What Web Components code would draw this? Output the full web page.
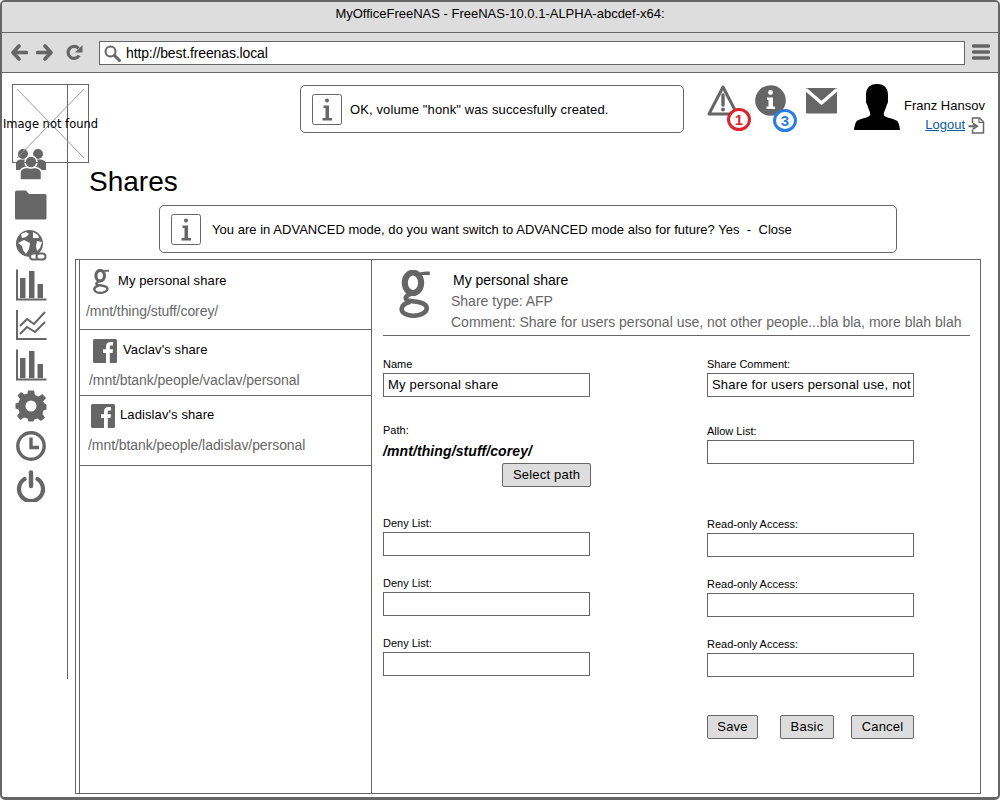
<!DOCTYPE html>
<html><head><meta charset="utf-8"><title>FreeNAS</title>
<style>
html,body{margin:0;padding:0;background:#fff}
body{font:13px "Liberation Sans",Arial,sans-serif;color:#000;width:1000px;height:800px;overflow:hidden}
</style></head><body>
<fs-window>
  <fs-titlebar>MyOfficeFreeNAS - FreeNAS-10.0.1-ALPHA-abcdef-x64:</fs-titlebar>
  <fs-toolbar url="http://best.freenas.local"></fs-toolbar>
  <fs-main>
    <fs-sidenav></fs-sidenav>
    <fs-content>
      <fs-header></fs-header>
      <fs-title>Shares</fs-title>
      <fs-notice class="banner" style="--gap:10px;letter-spacing:.03px">You are in ADVANCED mode, do you want switch to ADVANCED mode also for future? Yes&nbsp; -&nbsp; Close</fs-notice>
      <fs-panel>
        <fs-list slot="list">
          <fs-row icon="g" name="My personal share" path="/mnt/thing/stuff/corey/" style="--ix:13px;--gap:9px;--px:6px;--top:9px;--h:70px;--name:2px;--pt:9px"></fs-row>
          <fs-row icon="f" name="Vaclav's share" path="/mnt/btank/people/vaclav/personal" style="--ix:13px;--gap:6px;--px:9px;--top:9px;--h:66px;--name:1px;--pt:9px"></fs-row>
          <fs-row icon="f" name="Ladislav's share" path="/mnt/btank/people/ladislav/personal" style="--ix:11px;--gap:5px;--px:8px;--top:8px;--h:70px;--name:1px;--pt:9px"></fs-row>
        </fs-list>
        <fs-detail slot="detail"></fs-detail>
      </fs-panel>
    </fs-content>
    <fs-logo></fs-logo>
  </fs-main>
</fs-window>
<script>
const FONT='"Liberation Sans",Arial,sans-serif';
const ICONS={
 back:'<svg width="17" height="17" viewBox="0 0 17 17"><path d="M8 2 2 8.500 8 15M2.500 8.500H15.500" fill="none" stroke="#666" stroke-width="3.600" stroke-linecap="round" stroke-linejoin="round"/></svg>',
 fwd:'<svg width="17" height="17" viewBox="0 0 17 17"><path d="M9 2 15 8.500 9 15M14.500 8.500H1.500" fill="none" stroke="#666" stroke-width="3.600" stroke-linecap="round" stroke-linejoin="round"/></svg>',
 reload:'<svg width="17" height="17" viewBox="0 0 17 17"><path d="M13.200 11.500A6 6 0 1 1 12.500 4.300" fill="none" stroke="#666" stroke-width="3.200"/><path d="M16.500 1V8.500H9Z" fill="#666"/></svg>',
 search:'<svg width="17" height="17" viewBox="0 0 17 17"><circle cx="6.500" cy="6.500" r="5" fill="none" stroke="#666" stroke-width="2"/><path d="M10.500 10.500 15.500 15.500" stroke="#666" stroke-width="3" stroke-linecap="round"/></svg>',
 burger:'<svg width="18" height="18" viewBox="0 0 18 18"><path d="M1.500 2H16.500M1.500 8H16.500M1.500 14H16.500" stroke="#666" stroke-width="3.400" stroke-linecap="round"/></svg>',
 users:'<svg width="32" height="32" viewBox="0 0 32 32"><g fill="#666"><circle cx="8" cy="6" r="5"/><circle cx="23" cy="6" r="5"/><path d="M1 22V15.500Q1 12.500 5 11.500H11Q15 12.500 15 15.500V22ZM16 22V15.500Q16 12.500 20 11.500H26Q31 12.500 31 15.500V22Z"/><path d="M5 32V24.500Q5 21 10 19.500H21Q26.500 21 26.500 24.500V32Z" stroke="#fff" stroke-width="1.500"/><circle cx="16" cy="14" r="6" stroke="#fff" stroke-width="1.500"/></g></svg>',
 folder:'<svg width="32" height="32" viewBox="0 0 32 32"><path d="M0 4.500Q0 2.500 2 2.500H11L14 6H30Q31.500 6 31.500 7.500V30Q31.500 31.500 30 31.500H1.500Q0 31.500 0 30Z" fill="#666"/></svg>',
 globe:'<svg width="32" height="32" viewBox="0 0 32 32"><circle cx="14.500" cy="14.500" r="13.500" fill="#666"/><path d="M6 5 11 3 14 5 11 8 7 9ZM3 14 9 11 15 14 14 20 11 25 8 21 7 17ZM18 3 23 6 24 9 18 9ZM22 12 27 13 25 19 22 22 21 17Z" fill="#fff"/><g fill="#fff" stroke="#666" stroke-width="2"><rect x="15" y="24.500" width="9" height="6" rx="3"/><rect x="21.500" y="24.500" width="9" height="6" rx="3"/></g></svg>',
 bars:'<svg width="32" height="32" viewBox="0 0 32 32"><path d="M2 .500V30.500H31.500" fill="none" stroke="#666" stroke-width="2"/><path d="M5 9H10.500V29H5ZM14 2H19.500V29H14ZM22.500 15H28V29H22.500Z" fill="#666"/></svg>',
 lines:'<svg width="32" height="32" viewBox="0 0 32 32"><path d="M2 1V30H31.500" fill="none" stroke="#666" stroke-width="2"/><path d="M5 17 12 10 19 15 30 3M5 25 12 18 20 23 30 13" fill="none" stroke="#666" stroke-width="2"/></svg>',
 gear:'<svg width="32" height="32" viewBox="0 0 32 32"><path fill="#666" fill-rule="evenodd" d="M13 .5H19L20 5 23.500 6.500 27.500 4 31 8 28 11.500 29.500 13.500 31.500 14.500V19.500L28.500 20.500 27.500 24 30 27.500 26 31 22.500 28.500 19.500 29.500 18.500 31.500H13.500L12.500 28.500 9 27.500 5.500 30 2 26 4.500 22.500 3.500 19.500.5 18.500V13.500L3.500 12.500 5 9 2.500 5.500 6 2 9.500 4.500 12.500 3.500ZM16 10.500A5.500 5.500 0 1 0 16 21.500 5.500 5.500 0 0 0 16 10.500Z"/></svg>',
 clock:'<svg width="32" height="32" viewBox="0 0 32 32"><circle cx="16" cy="16" r="13.200" fill="none" stroke="#666" stroke-width="3.400"/><path d="M16 7.500V17.500H24" fill="none" stroke="#666" stroke-width="3.400"/></svg>',
 power:'<svg width="32" height="32" viewBox="0 0 32 32"><path d="M9.500 9A12 12 0 1 0 22.500 9" fill="none" stroke="#666" stroke-width="4.200" stroke-linecap="round"/><path d="M16 2.500V16" stroke="#666" stroke-width="4.400" stroke-linecap="round"/></svg>',
 info:'<svg width="31" height="31" viewBox="0 0 31 31"><rect x=".5" y=".5" width="29" height="30" rx="2" fill="#fff" stroke="#666"/><circle cx="15" cy="6.500" r="2" fill="#666"/><path d="M11.500 11.500H17V24H20V26.500H10.500V24H13.500V14H11.500Z" fill="#666"/></svg>',
 warn:'<svg width="32" height="33" viewBox="0 0 32 33"><path d="M16 3 30 30H2Z" fill="#fff" stroke="#666" stroke-width="3" stroke-linejoin="round"/><path d="M16 11V21" stroke="#666" stroke-width="3.400" stroke-linecap="round"/><circle cx="16" cy="25.500" r="1.900" fill="#666"/></svg>',
 infoc:'<svg width="31" height="31" viewBox="0 0 31 31"><circle cx="15.500" cy="15.500" r="15.300" fill="#666"/><circle cx="15.500" cy="7.500" r="2.400" fill="#fff"/><path d="M12 12.500H18V21.500H20V24H11.500V21.500H13.500V15H12Z" fill="#fff"/></svg>',
 mail:'<svg width="31" height="26" viewBox="0 0 31 26"><rect width="31" height="25.500" rx="1" fill="#666"/><path d="M0 1.500 15.500 15 31 1.500" fill="none" stroke="#fff" stroke-width="3.400"/></svg>',
 avatar:'<svg width="46" height="46" viewBox="0 0 46 46"><path d="M23 0C14 0 11.500 6 12 13 12.300 16.500 11.500 18 12.500 19.500 13.500 21 14 24 15 26 16 28 16.500 30 16 31.500 13 34.500 4 34.500 2 38 .5 41 .3 44 0 46H46C45.700 44 45.500 41 44 38 42 34.500 33 34.500 30 31.500 29.500 30 30 28 31 26 32 24 32.500 21 33.500 19.500 34.500 18 33.700 16.500 34 13 34.500 6 32 0 23 0Z" fill="#000"/></svg>',
 logout:'<svg width="17" height="17" viewBox="0 0 17 17"><path d="M4.500 6V1H11.500L15.500 5V16H4.500V12.500" fill="none" stroke="#666" stroke-width="1.500"/><path d="M11 1.500V5.500H15" fill="none" stroke="#666" stroke-width="1.200"/><path d="M.5 9.300H6.500M5 6.500 9 9.300 5 12" fill="none" stroke="#666" stroke-width="2"/></svg>',
 f:'<svg width="24" height="24" viewBox="0 0 24 24"><rect width="24" height="24" rx="1.500" fill="#666"/><path d="M13 24V14H10V10.300H13V7.500C13 4.500 14.800 3 17.300 3H20V6.500H18.200C17 6.500 16.800 7 16.800 8V10.300H20L19.500 14H16.800V24Z" fill="#fff"/></svg>',
 g:'<svg width="16" height="25" viewBox="0 0 30 47"><g fill="none" stroke="#666"><ellipse cx="13.500" cy="12.500" rx="8" ry="10" stroke-width="6"/><path d="M12 23C7 25 5.500 27 7 29 9 31.500 26 29.500 27 37 27.500 42 20 45 13 44.800 6 44.500 2 41.500 2.500 37.500 3 34 7 32 11 31" stroke-width="4.500"/></g><path d="M17 4.500C20 1.500 25 1.500 30 1.500V5H20Z" fill="#666"/></svg>'
};
function el(name,tpl,after){
  customElements.define(name,class extends HTMLElement{
    constructor(){super();this.attachShadow({mode:'open'}).innerHTML=typeof tpl==='function'?tpl(this):tpl;}
    connectedCallback(){if(after)after(this);}
  });
}
const bigG=ICONS.g.replace('width="16" height="25"','width="31" height="48"');

el('fs-icon',h=>`<style>:host{display:inline-flex;flex:none;line-height:0}</style><span id="i"></span>`,h=>{
  h.shadowRoot.getElementById('i').innerHTML=ICONS[h.getAttribute('name')]||'';
});
el('fs-window',`<style>:host{display:flex;flex-direction:column;box-sizing:border-box;width:1000px;height:800px;border:2px solid #666;border-bottom-width:3px;border-radius:5px;overflow:hidden;background:#fff}</style><slot></slot>`);
el('fs-titlebar',`<style>:host{display:flex;flex:none;align-items:center;justify-content:center;box-sizing:border-box;height:31px;padding-bottom:7px;background:#ddd;border-bottom:1px solid #666;font:13px ${FONT};color:#000}</style><slot></slot>`);
el('fs-toolbar',h=>`<style>
:host{display:flex;flex:none;box-sizing:border-box;height:40px;background:#ddd;border-bottom:1px solid #666;align-items:flex-start}
fs-icon{margin-top:11px}
.url{box-sizing:border-box;display:flex;align-items:center;width:866px;height:24px;margin:8px 0 0 16px;border:1px solid #666;background:#fff;font:14px ${FONT};letter-spacing:-.12px}
.url fs-icon{margin:0 5px 0 4px}
</style>
<fs-icon name="back" style="margin-left:9px"></fs-icon>
<fs-icon name="fwd" style="margin-left:8px"></fs-icon>
<fs-icon name="reload" style="margin-left:13px"></fs-icon>
<div class="url"><fs-icon name="search"></fs-icon><span>${h.getAttribute('url')}</span></div>
<fs-icon name="burger" style="margin-left:7px;margin-top:11px"></fs-icon>`);
el('fs-main',`<style>:host{display:flex;flex:1;position:relative;min-height:0}</style><slot></slot>`);
el('fs-sidenav',`<style>
:host{display:flex;flex:none;flex-direction:column;box-sizing:border-box;width:66px;height:595px;margin-top:11px;border-right:1px solid #666;padding:64px 0 0 13px;gap:8.250px}
</style>${['users','folder','globe','bars','lines','bars','gear','clock','power'].map(n=>`<fs-icon name="${n}"></fs-icon>`).join('')}`);
el('fs-logo',`<style>
:host{position:absolute;left:10px;top:11px;width:77px;height:79px;box-sizing:border-box;border:1px solid #666;display:flex;align-items:center;justify-content:center;padding-top:1px}
svg{position:absolute;inset:0}
span{position:relative;font:11.500px "DejaVu Sans",sans-serif;color:#000;white-space:nowrap}
</style><svg width="75" height="77" viewBox="0 0 75 77"><path d="M4 4 71 73M71 4 4 73" stroke="#999" stroke-width="1" fill="none"/></svg><span>Image not found</span>`);
el('fs-content',`<style>:host{display:flex;flex-direction:column;flex:1;min-width:0}</style><slot></slot>`);
el('fs-notice',`<style>
:host{display:flex;align-items:center;box-sizing:border-box;width:738px;height:48px;margin-left:91px;margin-top:4px;border:1px solid #666;border-radius:5px;padding-left:11px;gap:var(--gap,7px);font:13px ${FONT};color:#000;flex:none}
</style><fs-icon name="info"></fs-icon><span><slot></slot></span>`);
el('fs-header',`<style>
:host{display:flex;flex:none;height:88px;box-sizing:border-box;padding-top:12px;align-items:flex-start;font:13px ${FONT}}
fs-notice{width:384px;margin:0 0 0 232px;flex:none;letter-spacing:.12px}
.alert{position:relative;flex:none;line-height:0}
fs-count{position:absolute}
.user{margin-left:4px;padding-top:12px;width:81px;flex:none;text-align:right;line-height:18px;white-space:nowrap}
a{color:#0b5a9e;text-decoration:underline}
.log{display:flex;align-items:center;justify-content:flex-end;gap:3px;margin-top:1px}
</style>
<fs-notice>OK, volume "honk" was succesfully created.</fs-notice>
<div class="alert" style="margin-left:23px;margin-top:-1px"><fs-icon name="warn"></fs-icon><fs-count color="#d9252b" style="left:20px;top:24px">1</fs-count></div>
<div class="alert" style="margin-left:16px;margin-top:0"><fs-icon name="infoc"></fs-icon><fs-count color="#2a7de1" style="left:18px;top:24px">3</fs-count></div>
<div class="alert" style="margin-left:20px;margin-top:3px"><fs-icon name="mail"></fs-icon></div>
<div class="alert" style="margin-left:17px;margin-top:-1px"><fs-icon name="avatar"></fs-icon></div>
<div class="user"><div style="padding-right:1px">Franz Hansov</div><div class="log"><a>Logout</a><fs-icon name="logout"></fs-icon></div></div>`);
el('fs-count',h=>`<style>
:host{display:flex;align-items:center;justify-content:center;box-sizing:border-box;width:24px;height:23px;border-radius:50%;background:#fff;border:3px solid ${h.getAttribute('color')};color:${h.getAttribute('color')};font:bold 15px/1 ${FONT}}
</style><slot></slot>`);
el('fs-title',`<style>:host{display:block;flex:none;height:39px;margin:1px 0 0 21px;font:28px/40px ${FONT};color:#000}</style><slot></slot>`);
el('fs-panel',`<style>
:host{display:flex;flex:none;box-sizing:border-box;width:906px;height:535px;margin:6px 0 0 7px;border:1px solid #666;padding-left:3px}
</style><slot name="list"></slot><slot name="detail"></slot>`);
el('fs-list',`<style>:host{display:block;flex:none;box-sizing:border-box;width:293px;border-left:1px solid #666;border-right:1px solid #666}</style><slot></slot>`);
el('fs-row',h=>`<style>
:host{display:block;box-sizing:border-box;height:var(--h);border-bottom:1px solid #666;padding-top:var(--top);font:13px ${FONT}}
.head{display:flex;align-items:flex-start;padding-left:var(--ix);gap:var(--gap);color:#000;letter-spacing:.1px}
.name{line-height:20px;margin-top:var(--name)}
.path{padding-left:var(--px);padding-top:var(--pt);color:#666;line-height:16px;font-size:14px;letter-spacing:-.06px}
</style>
<div class="head"><fs-icon name="${h.getAttribute('icon')}"></fs-icon><span class="name">${h.getAttribute('name')}</span></div>
<div class="path">${h.getAttribute('path')}</div>`);
el('fs-field',h=>`<style>
:host{display:block;flex:none;width:207px;font:13px ${FONT}}
.l{font-size:11px;line-height:14px;height:14px;margin-bottom:2px;color:#000}
.i{box-sizing:border-box;height:24px;border:1px solid #666;background:#fff;line-height:22px;padding:0 4px;white-space:nowrap;overflow:hidden;color:#000;letter-spacing:.2px}
</style><div class="l">${h.getAttribute('label')}</div><div class="i"><slot></slot></div>`);
el('fs-button',`<style>
:host{display:inline-flex;align-items:center;justify-content:center;box-sizing:border-box;height:24px;padding-bottom:1px;background:#ddd;border:1px solid #666;border-radius:2px;font:13px ${FONT};letter-spacing:.2px;color:#000;flex:none}
</style><slot></slot>`);
el('fs-detail',`<style>
:host{display:block;flex:1;min-width:0;box-sizing:border-box;padding:0 10px 0 11px;font:13px ${FONT}}
.head{display:flex;box-sizing:border-box;height:76px;padding:10px 0 2px;border-bottom:1px solid #666}
.head fs-g{margin-left:16px;line-height:0}
.txt{margin-left:21px;line-height:21px;color:#666;font-size:14px;white-space:nowrap}
.txt .t{color:#000;padding-left:2px}
.form{display:flex;gap:117px}
.col{display:flex;flex-direction:column;width:207px;align-items:flex-start}
.plabel{font-size:11px;line-height:14px;margin-top:26px}
.pval{font:italic bold 14px/14px ${FONT};letter-spacing:.1px;margin-top:7px}
.btns{display:flex;margin-top:38px}
</style>
<div class="head"><fs-g></fs-g><div class="txt"><div class="t">My personal share</div><div>Share type: AFP</div><div>Comment: Share for users personal use, not other people...bla bla, more blah blah</div></div></div>
<div class="form">
<div class="col">
  <fs-field label="Name" style="margin-top:21px">My personal share</fs-field>
  <div class="plabel">Path:</div>
  <div class="pval">/mnt/thing/stuff/corey/</div>
  <fs-button style="width:89px;margin:5px 0 0 119px">Select path</fs-button>
  <fs-field label="Deny List:" style="margin-top:29px"></fs-field>
  <fs-field label="Deny List:" style="margin-top:20px"></fs-field>
  <fs-field label="Deny List:" style="margin-top:20px"></fs-field>
</div>
<div class="col">
  <fs-field label="Share Comment:" style="margin-top:21px">Share for users personal use, not</fs-field>
  <fs-field label="Allow List:" style="margin-top:27px"></fs-field>
  <fs-field label="Read-only Access:" style="margin-top:53px"></fs-field>
  <fs-field label="Read-only Access:" style="margin-top:20px"></fs-field>
  <fs-field label="Read-only Access:" style="margin-top:20px"></fs-field>
  <div class="btns"><fs-button style="width:51px">Save</fs-button><fs-button style="width:54px;margin-left:22px">Basic</fs-button><fs-button style="width:63px;margin-left:17px">Cancel</fs-button></div>
</div>
</div>`);
el('fs-g',`<style>:host{display:block;flex:none}</style>${bigG}`);
</script>
</body></html>
